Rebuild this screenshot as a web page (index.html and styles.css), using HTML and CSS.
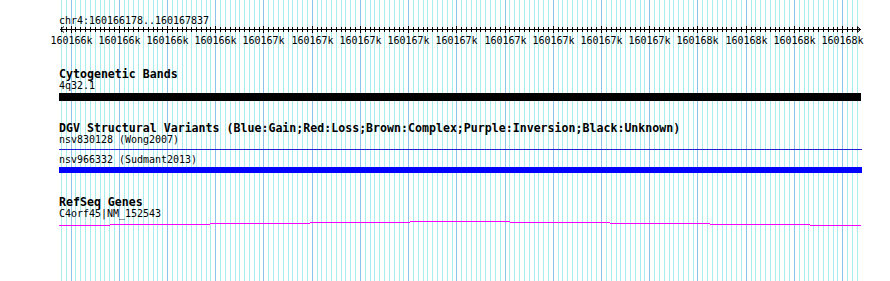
FILE: index.html
```html
<!DOCTYPE html>
<html lang="en">
  <head>
    <meta charset="UTF-8" />
    <meta name="viewport" content="width=device-width, initial-scale=1.0" />
    <title>chr4:160166178..160167837</title>
    <link rel="stylesheet" href="styles.css">
  </head>

  <body>
    <div class="browser">
      <svg id="grid" class="grid" width="890" height="281"></svg>

      <div class="ruler">
        <div class="small ruler-name">chr4:160166178..160167837</div>
        <svg id="axis" class="axis" width="890" height="20"></svg>
      </div>

      <div class="track track-bands">
        <div class="track-title">Cytogenetic Bands</div>
        <div class="small">4q32.1</div>
        <div class="band"></div>
      </div>

      <div class="track track-dgv">
        <div class="track-title">DGV Structural Variants (Blue:Gain;Red:Loss;Brown:Complex;Purple:Inversion;Black:Unknown)</div>
        <div class="small">nsv830128 (Wong2007)</div>
        <div class="variant-thin"></div>
        <div class="small variant-label">nsv966332 (Sudmant2013)</div>
        <div class="variant-gain"></div>
      </div>

      <div class="track track-genes">
        <div class="track-title">RefSeq Genes</div>
        <div class="small">C4orf45|NM_152543</div>
        <svg class="gene" width="802" height="7">
          <path d="M0 5.5H51M51 4.5H151M151 3.5H251M251 2.5H351M351 1.5H451M451 2.5H551M551 3.5H651M651 4.5H751M751 5.5H802" />
        </svg>
      </div>
    </div>

    <script>
      const start = 160166178;
      const end = 160167837;
      const left = 60;
      const scale = 800 / (end - start);
      const svgNS = 'http://www.w3.org/2000/svg';

      const grid = document.querySelector('#grid');
      const axis = document.querySelector('#axis');

      // позиция в пикселях для координаты на хромосоме
      function toX(bp) {
        return Math.round(left + (bp - start) * scale) + 0.5;
      }

      function addLine(parent, x1, y1, x2, y2, cls) {
        const line = document.createElementNS(svgNS, 'line');
        line.setAttribute('x1', x1);
        line.setAttribute('y1', y1);
        line.setAttribute('x2', x2);
        line.setAttribute('y2', y2);
        line.setAttribute('class', cls);
        parent.append(line);
      }

      // округление до тысяч (половину к чётному)
      function kiloLabel(bp) {
        const k = bp / 1000;
        const low = Math.floor(k);
        if (Math.abs(k - low - 0.5) < 1e-9) {
          return (low % 2 === 0 ? low : low + 1) + 'k';
        }
        return Math.round(k) + 'k';
      }

      // сетка и деления линейки через каждые 10 bp
      for (let bp = Math.ceil(start / 10) * 10; bp <= end; bp += 10) {
        const x = toX(bp);
        const major = bp % 100 === 0;
        addLine(grid, x, 0, x, 281, major ? 'grid-major' : 'grid-minor');
        if (major) {
          addLine(axis, x, -1, x, 6, 'tick');
          const label = document.createElementNS(svgNS, 'text');
          label.setAttribute('x', x);
          label.setAttribute('y', 17);
          label.setAttribute('class', 'tick-label');
          label.textContent = kiloLabel(bp);
          axis.append(label);
        } else {
          addLine(axis, x, 0, x, 5, 'tick');
        }
      }

      addLine(axis, 60, 2.5, 861, 2.5, 'tick');

      const arrows = document.createElementNS(svgNS, 'path');
      arrows.setAttribute('d', 'M64 -0.5L60.5 2.5L64 5.5M857 -0.5L860.5 2.5L857 5.5');
      arrows.setAttribute('class', 'arrow');
      axis.append(arrows);
    </script>
  </body>
</html>
```

FILE: styles.css
```css
body {
  margin: 0;
  background-color: #ffffff;
  color: #000000;
  font-family: "DejaVu Sans Mono", "Liberation Mono", monospace;
}

.browser {
  position: relative;
  width: 890px;
  height: 281px;
  overflow: hidden;
}

.grid {
  position: absolute;
  top: 0;
  left: 0;
  z-index: 0;
}

.grid line {
  stroke-width: 1;
  shape-rendering: crispEdges;
}

.grid-minor {
  stroke: #a8eeee;
}

.grid-major {
  stroke: #8cc4ec;
}

.ruler,
.track {
  position: relative;
  z-index: 1;
}

.ruler {
  padding-top: 15px;
}

.ruler-name {
  padding-left: 59px;
}

.axis {
  display: block;
  overflow: visible;
}

.tick {
  stroke: #000000;
  stroke-width: 1;
  shape-rendering: crispEdges;
}

.arrow {
  fill: none;
  stroke: #000000;
  stroke-width: 1;
}

.tick-label {
  font-family: "DejaVu Sans Mono", "Liberation Mono", monospace;
  font-size: 10px;
  text-anchor: middle;
  fill: #000000;
}

.small {
  font-size: 10px;
  line-height: 12px;
  letter-spacing: -0.02px;
  white-space: nowrap;
}

.track {
  padding-left: 59px;
}

.track-title {
  font-size: 11.6px;
  font-weight: bold;
  line-height: 12px;
  white-space: nowrap;
}

.track-bands {
  margin-top: 21px;
}

.band {
  width: 802px;
  height: 8px;
  margin-top: 1px;
  background-color: #000000;
}

.track-dgv {
  margin-top: 21px;
}

.variant-thin {
  width: 803px;
  height: 1px;
  margin-top: 3px;
  background-color: #2020d0;
}

.variant-label {
  margin-top: 4px;
}

.variant-gain {
  width: 803px;
  height: 6px;
  margin-top: 1px;
  background-color: #0000ff;
}

.track-genes {
  margin-top: 23px;
}

.gene {
  display: block;
}

.gene path {
  fill: none;
  stroke: #ff00ff;
  stroke-width: 1;
  shape-rendering: crispEdges;
}
```
